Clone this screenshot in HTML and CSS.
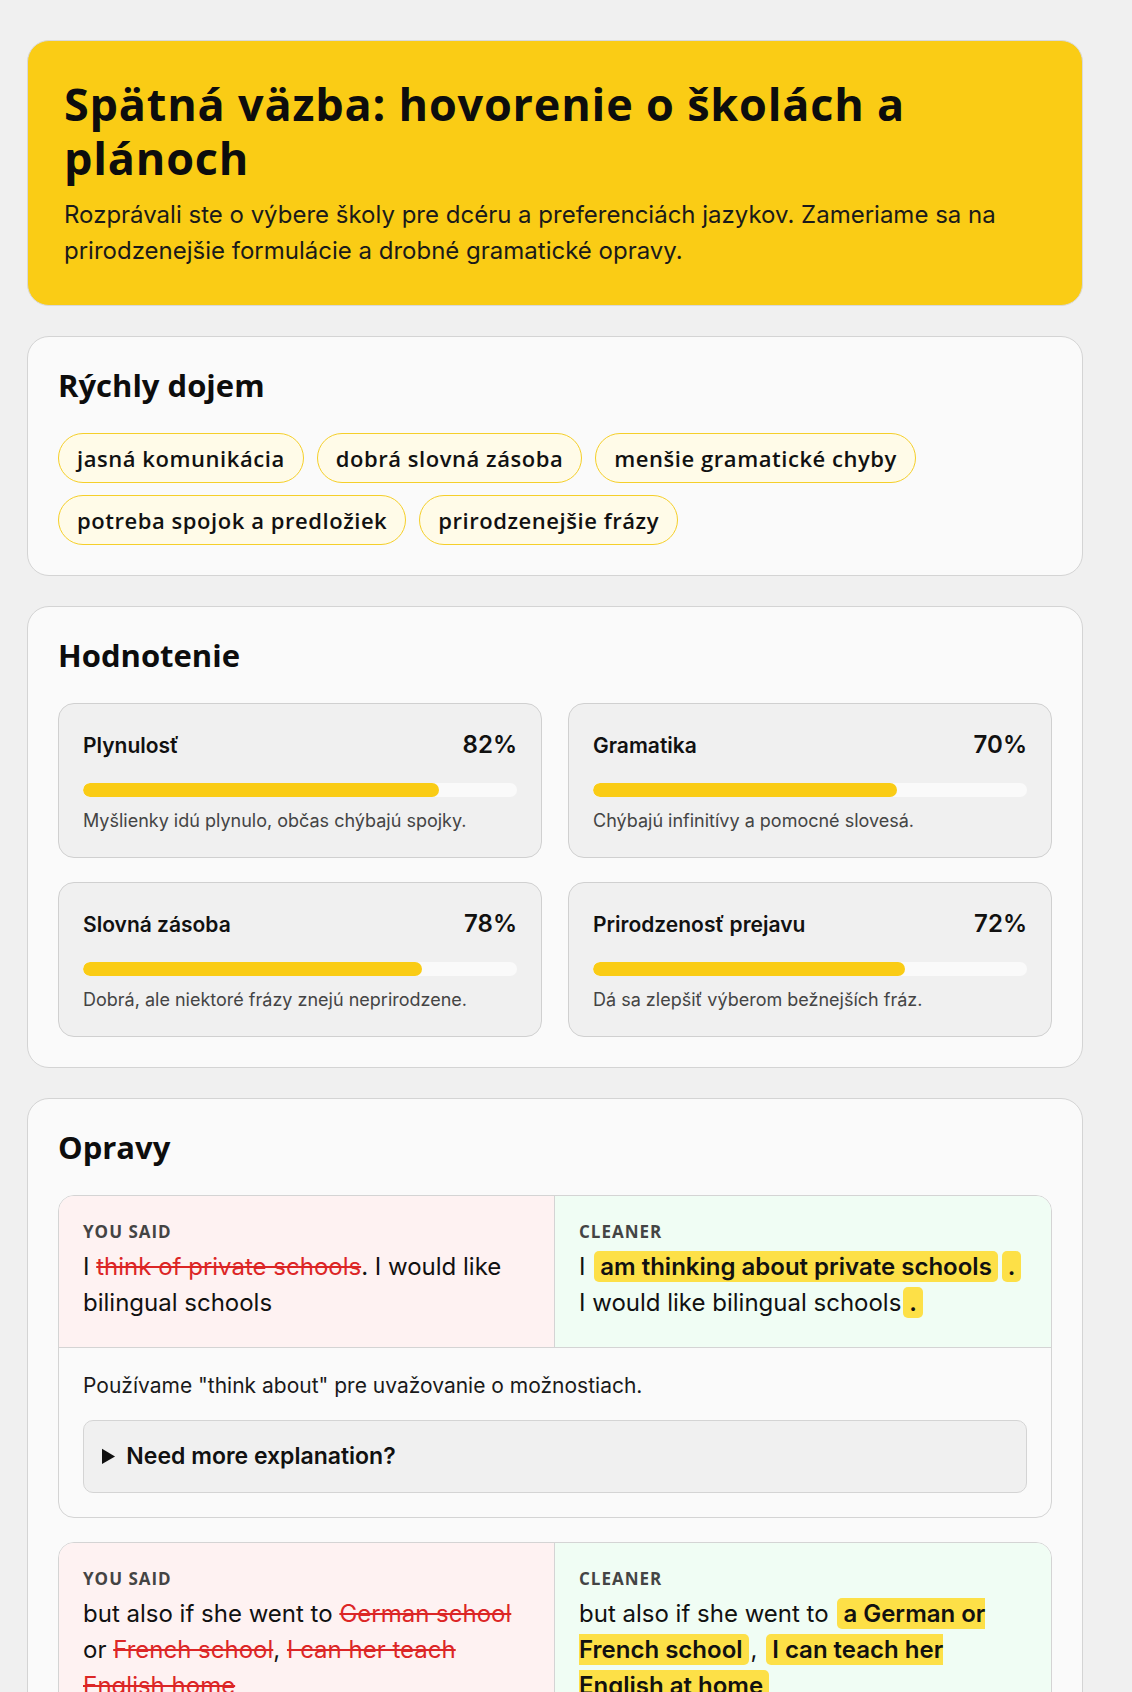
FILE: index.html
```html
<!DOCTYPE html>
<html lang="sk">
<head>
<meta charset="utf-8">
<title>Spätná väzba</title>
<link rel="stylesheet" href="styles.css">
</head>
<body>
<div class="page">
  <header class="hero">
    <h1>Spätná väzba: hovorenie o školách a plánoch</h1>
    <p>Rozprávali ste o výbere školy pre dcéru a preferenciách jazykov. Zameriame sa na prirodzenejšie formulácie a drobné gramatické opravy.</p>
  </header>

  <section class="card">
    <h2>Rýchly dojem</h2>
    <div class="chips">
      <span class="chip">jasná komunikácia</span>
      <span class="chip">dobrá slovná zásoba</span>
      <span class="chip">menšie gramatické chyby</span>
      <span class="chip">potreba spojok a predložiek</span>
      <span class="chip">prirodzenejšie frázy</span>
    </div>
  </section>

  <section class="card">
    <h2>Hodnotenie</h2>
    <div class="metrics">
      <div class="metric">
        <div class="metric-head"><span class="metric-label">Plynulosť</span><span class="metric-pct">82%</span></div>
        <div class="bar"><div class="bar-fill" style="width:82%"></div></div>
        <p class="metric-desc">Myšlienky idú plynulo, občas chýbajú spojky.</p>
      </div>
      <div class="metric">
        <div class="metric-head"><span class="metric-label">Gramatika</span><span class="metric-pct">70%</span></div>
        <div class="bar"><div class="bar-fill" style="width:70%"></div></div>
        <p class="metric-desc">Chýbajú infinitívy a pomocné slovesá.</p>
      </div>
      <div class="metric">
        <div class="metric-head"><span class="metric-label">Slovná zásoba</span><span class="metric-pct">78%</span></div>
        <div class="bar"><div class="bar-fill" style="width:78%"></div></div>
        <p class="metric-desc">Dobrá, ale niektoré frázy znejú neprirodzene.</p>
      </div>
      <div class="metric">
        <div class="metric-head"><span class="metric-label">Prirodzenosť prejavu</span><span class="metric-pct">72%</span></div>
        <div class="bar"><div class="bar-fill" style="width:72%"></div></div>
        <p class="metric-desc">Dá sa zlepšiť výberom bežnejších fráz.</p>
      </div>
    </div>
  </section>

  <section class="card">
    <h2>Opravy</h2>
    <div class="corrections">
      <article class="corr">
        <div class="corr-cols">
          <div class="corr-col said">
            <div class="corr-label">You said</div>
            <p class="corr-text">I <s>think of private schools</s>. I would like bilingual schools</p>
          </div>
          <div class="corr-col cleaner">
            <div class="corr-label">Cleaner</div>
            <p class="corr-text">I <mark>am thinking about private schools</mark><mark>.</mark> I would like bilingual schools<mark>.</mark></p>
          </div>
        </div>
        <div class="corr-foot">
          <p class="corr-note">Používame "think about" pre uvažovanie o možnostiach.</p>
          <details class="more">
            <summary>Need more explanation?</summary>
            <p>„Think of“ znamená skôr „napadne mi“. Keď zvažujete možnosti, použite „I am thinking about…“.</p>
          </details>
        </div>
      </article>

      <article class="corr">
        <div class="corr-cols">
          <div class="corr-col said">
            <div class="corr-label">You said</div>
            <p class="corr-text">but also if she went to <s>German school</s> or <s>French school</s>, <s>I can her teach English home</s></p>
          </div>
          <div class="corr-col cleaner">
            <div class="corr-label">Cleaner</div>
            <p class="corr-text">but also if she went to <mark>a German or French school</mark>, <mark>I can teach her English at home</mark></p>
          </div>
        </div>
        <div class="corr-foot">
          <p class="corr-note">Pred podstatným menom potrebujeme člen „a“ a slovosled „teach her English at home“.</p>
          <details class="more">
            <summary>Need more explanation?</summary>
            <p>V angličtine ide nepriamy predmet (her) hneď za sloveso a pred priamy predmet (English).</p>
          </details>
        </div>
      </article>
    </div>
  </section>
</div>
</body>
</html>
```

FILE: styles.css
```css
* { box-sizing: border-box; }

body {
  margin: 0;
  background: #f0f0f0;
  font-family: Inter, "Noto Sans", sans-serif;
  color: #111111;
}

.page {
  padding: 40px 49px 40px 27px;
  display: flex;
  flex-direction: column;
  gap: 30px;
}

.hero {
  background: #facc15;
  border: 1px solid #d9d9d9;
  border-radius: 22px;
  padding: 36px;
}

.hero h1 {
  margin: 0 0 12px;
  font-family: "Open Sans", sans-serif;
  font-weight: 700;
  font-size: 45px;
  line-height: 54px;
  letter-spacing: 0.8px;
  color: #0d0d0d;
}

.hero p {
  margin: 0;
  font-size: 24px;
  line-height: 36px;
  color: #1a1a1a;
}

.card {
  background: #fafafa;
  border: 1px solid #d4d4d4;
  border-radius: 22px;
  padding: 30px;
}

.card h2 {
  margin: 0 0 30px;
  font-family: "Open Sans", sans-serif;
  font-weight: 700;
  font-size: 31px;
  line-height: 36px;
  letter-spacing: 0;
  color: #0d0d0d;
}

.chips {
  display: flex;
  flex-wrap: wrap;
  gap: 12px 13px;
}

.chip {
  background: #fffbe8;
  border: 1px solid #f5cf2a;
  border-radius: 999px;
  padding: 10px 18px;
  font-family: "Open Sans", sans-serif;
  font-weight: 600;
  font-size: 22px;
  line-height: 28px;
  letter-spacing: 0.55px;
  color: #111111;
}

.metrics {
  display: grid;
  grid-template-columns: 1fr 1fr;
  gap: 24px 26px;
}

.metric {
  background: #f0f0f0;
  border: 1px solid #d0d0d0;
  border-radius: 16px;
  padding: 24px;
  height: 155px;
}

.metric-head {
  display: flex;
  justify-content: space-between;
  align-items: baseline;
  height: 34px;
}

.metric-label {
  font-size: 21px;
  font-weight: 600;
  line-height: 34px;
}

.metric-pct {
  font-size: 24px;
  font-weight: 600;
  line-height: 34px;
}

.bar {
  margin-top: 21px;
  height: 14px;
  border-radius: 7px;
  background: #fafafa;
  overflow: hidden;
}

.bar-fill {
  height: 100%;
  background: #facc15;
  border-radius: 7px;
}

.metric-desc {
  margin: 12px 0 0;
  font-size: 18px;
  line-height: 24px;
  color: #444444;
}

.corrections {
  display: flex;
  flex-direction: column;
  gap: 24px;
}

.corr {
  border: 1px solid #d4d4d4;
  border-radius: 16px;
  overflow: hidden;
  background: #fafafa;
}

.corr-cols {
  display: grid;
  grid-template-columns: 1fr 1fr;
  border-bottom: 1px solid #d4d4d4;
}

.corr-col {
  padding: 24px 24px 26px;
}

.corr-col.said {
  background: #fef2f2;
  border-right: 1px solid #d4d4d4;
}

.corr-col.cleaner {
  background: #f0fdf4;
}

.corr-label {
  font-family: "Open Sans", sans-serif;
  font-weight: 700;
  font-size: 17px;
  line-height: 24px;
  letter-spacing: 1px;
  text-transform: uppercase;
  color: #444444;
}

.corr-text {
  margin: 5px 0 0;
  font-size: 24px;
  line-height: 36px;
  color: #111111;
}

.corr-text s {
  color: #dc2626;
  text-decoration-color: #dc2626;
  text-decoration-thickness: 2px;
}

.corr-text mark {
  background: #fde047;
  color: #111111;
  font-weight: 600;
  border-radius: 5px;
  padding: 1px 6px;
  margin: 0 2px;
}

.corr-foot {
  padding: 24px;
}

.corr-note {
  margin: 0 0 20px;
  font-size: 21px;
  line-height: 28px;
  color: #1a1a1a;
}

.more {
  background: #f0f0f0;
  border: 1px solid #d4d4d4;
  border-radius: 10px;
  padding: 18px;
}

.more summary {
  font-size: 23px;
  font-weight: 600;
  line-height: 35px;
  cursor: pointer;
}

.more p {
  margin: 10px 0 0;
  font-size: 20px;
  line-height: 30px;
}
```
